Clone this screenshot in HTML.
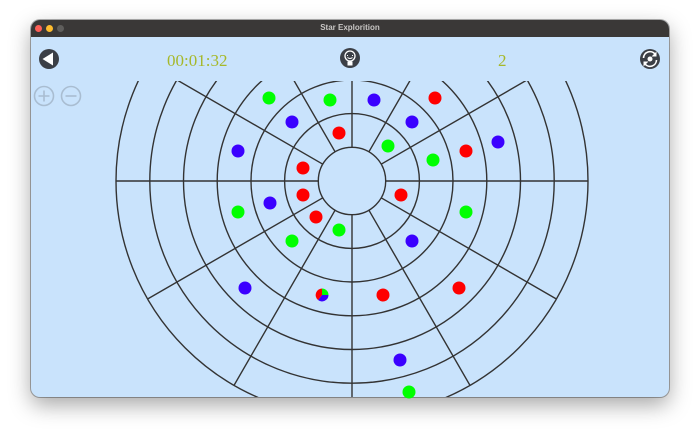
<!DOCTYPE html>
<html><head><style>
html,body{margin:0;padding:0;width:700px;height:438px;background:#fff;overflow:hidden;font-family:"Liberation Sans",sans-serif}
.win{position:absolute;left:31px;top:20px;width:638px;height:377px;border-radius:9px;overflow:hidden;background:#c9e3fc;box-shadow:0 8px 22px rgba(0,0,0,.35),0 0 0 1px rgba(0,0,0,.3)}
.tb{position:absolute;left:0;top:0;width:100%;height:17px;background:#3a3837}
.tl{position:absolute;top:5px;width:7px;height:7px;border-radius:50%}
.title{position:absolute;left:0;width:100%;top:3px;text-align:center;color:#c8c6c4;font-size:8px;font-weight:bold}
.num{position:absolute;font-family:"Liberation Serif",serif;font-size:17px;color:#a6b82a}
</style></head><body>
<div class="win">
<div class="tb">
<div class="tl" style="left:4px;background:#fe5f57"></div>
<div class="tl" style="left:15px;background:#febc2e"></div>
<div class="tl" style="left:26px;background:#5f5e5c"></div>
<div class="title">Star Explorition</div>
</div>
</div>
<div class="num" style="left:167px;top:51px">00:01:32</div>
<div class="num" style="left:498px;top:51px">2</div>
<svg width="700" height="438" style="position:absolute;left:0;top:0">
<defs><clipPath id="c"><rect x="31" y="81" width="638" height="316"/></clipPath></defs>
<circle cx="49" cy="59" r="10" fill="#3b3f46"/>
<path d="M42.5 59 L53 52.5 L53 65.5 Z" fill="#fff"/>
<circle cx="350" cy="58" r="10" fill="#3b3f46"/>
<circle cx="350" cy="56" r="5" fill="none" stroke="#fff" stroke-width="1.3"/>
<path d="M347 55.5h1M352 55.5h1M347.5 57.5q2.5 2 5 0" stroke="#fff" stroke-width="1" fill="none"/>
<rect x="347.5" y="61.5" width="5" height="4" fill="#fff"/>
<circle cx="650" cy="59" r="10" fill="#3b3f46"/>
<path d="M643.5 58a6.5 6.5 0 0 1 11.5-4M656.5 60a6.5 6.5 0 0 1-11.5 4" fill="none" stroke="#fff" stroke-width="1.6"/>
<path d="M656.5 51.5v5h-5zM643.5 66.5v-5h5z" fill="#fff"/>
<circle cx="650" cy="59" r="2.5" fill="#fff"/>
<g fill="none" stroke="#a9bdd1" stroke-width="1.6">
<circle cx="44" cy="96" r="9.5"/><path d="M38.5 96h11M44 90.5v11"/>
<circle cx="71" cy="96" r="9.5"/><path d="M65.5 96h11"/>
</g>
<g clip-path="url(#c)" fill="none" stroke="#333" stroke-width="1.4">
<circle cx="352" cy="181" r="33.7"/><circle cx="352" cy="181" r="67.4"/><circle cx="352" cy="181" r="101"/><circle cx="352" cy="181" r="134.8"/><circle cx="352" cy="181" r="168.5"/><circle cx="352" cy="181" r="202.2"/><circle cx="352" cy="181" r="236"/>
<path d="M385.7 181H588M318.3 181H116M352 147.3V-55M352 214.7V417
M381.2 164.2L556.4 63M322.8 164.2L147.6 63M381.2 197.8L556.4 299M322.8 197.8L147.6 299
M368.9 151.8L470 -23.4M335.1 151.8L234 -23.4M368.9 210.2L470 385.4M335.1 210.2L234 385.4"/>
</g>
<g>
<g fill="#00ff00"><circle cx="269" cy="98" r="6.5"/><circle cx="330" cy="100" r="6.5"/><circle cx="388" cy="146" r="6.5"/><circle cx="433" cy="160" r="6.5"/><circle cx="466" cy="212" r="6.5"/><circle cx="292" cy="241" r="6.5"/><circle cx="339" cy="230" r="6.5"/><circle cx="238" cy="212" r="6.5"/><circle cx="409" cy="392" r="6.5"/></g>
<g fill="#3b00ff"><circle cx="374" cy="100" r="6.5"/><circle cx="292" cy="122" r="6.5"/><circle cx="412" cy="122" r="6.5"/><circle cx="238" cy="151" r="6.5"/><circle cx="498" cy="142" r="6.5"/><circle cx="270" cy="203" r="6.5"/><circle cx="412" cy="241" r="6.5"/><circle cx="245" cy="288" r="6.5"/><circle cx="400" cy="360" r="6.5"/></g>
<g fill="#ff0000"><circle cx="435" cy="98" r="6.5"/><circle cx="339" cy="133" r="6.5"/><circle cx="466" cy="151" r="6.5"/><circle cx="303" cy="168" r="6.5"/><circle cx="303" cy="195" r="6.5"/><circle cx="401" cy="195" r="6.5"/><circle cx="316" cy="217" r="6.5"/><circle cx="383" cy="295" r="6.5"/><circle cx="459" cy="288" r="6.5"/></g>
<path d="M322 295L322 288.5A6.5 6.5 0 0 1 328.5 295Z" fill="#00ff00"/>
<path d="M322 295L328.5 295A6.5 6.5 0 0 1 318 300Z" fill="#3b00ff"/>
<path d="M322 295L318 300A6.5 6.5 0 0 1 322 288.5Z" fill="#ff0000"/>
</g>
</svg>
</body></html>
